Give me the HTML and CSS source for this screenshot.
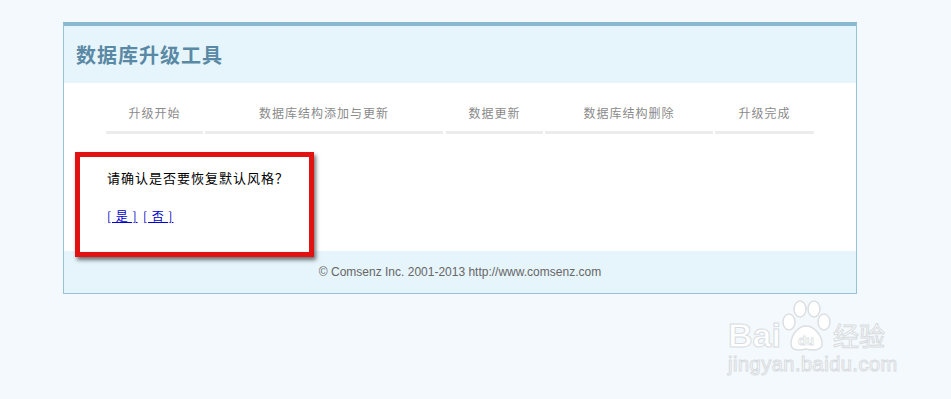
FILE: index.html
```html
<!DOCTYPE html>
<html lang="zh-CN">
<head>
    <meta charset="UTF-8">
    <title>数据库升级工具</title>
    <link rel="stylesheet" href="styles.css">
</head>
<body>
    <div class="container">
        <div class="header">
            <h1>数据库升级工具</h1>
        </div>
        <div class="main">
            <ul class="steps">
                <li class="s1">升级开始</li>
                <li class="s2">数据库结构添加与更新</li>
                <li class="s3">数据更新</li>
                <li class="s4">数据库结构删除</li>
                <li class="s5">升级完成</li>
            </ul>
            <div class="msg">
                <p>请确认是否要恢复默认风格？</p>
                <p class="links"><a href="#">[&nbsp;是&nbsp;]</a>&nbsp; <a href="#">[&nbsp;否&nbsp;]</a></p>
            </div>
        </div>
        <div class="footer">&copy; Comsenz Inc. 2001-2013 http://www.comsenz.com</div>
    </div>
    <div class="mark"></div>
    <div class="watermark">
        <div class="wm-top">
            <span class="wm-bai">Bai</span>
            <svg class="paw" width="50" height="52" viewBox="0 0 50 52">
                <g fill="#fff" stroke="#dcdfe2" stroke-width="1.5">
                    <ellipse cx="8" cy="22" rx="6" ry="8"/>
                    <ellipse cx="19" cy="9" rx="6" ry="8"/>
                    <ellipse cx="33" cy="9" rx="6" ry="8"/>
                    <ellipse cx="43" cy="22" rx="6" ry="8"/>
                    <path d="M10 44 C10 34 18 26 25 26 C32 26 41 34 41 44 C41 50 34 51 25 49 C16 51 10 50 10 44 Z"/>
                </g>
                <text x="25" y="45" text-anchor="middle" font-family="Liberation Sans, sans-serif" font-size="13" font-weight="bold" fill="#fff" stroke="#dcdfe2" stroke-width="0.8">du</text>
            </svg>
            <span class="wm-jy">经验</span>
        </div>
        <div class="wm-url">jingyan.baidu.com</div>
    </div>
</body>
</html>
```

FILE: styles.css
```css
body {
    margin: 0;
    padding: 0;
    background: #f3f9fd;
    font-family: "Liberation Sans", Arial, "Noto Sans CJK SC", sans-serif;
    font-size: 12px;
}
.container {
    width: 792px;
    margin: 22px 0 0 63px;
    border: 1px solid #98c2d6;
    border-top: 4px solid #88b9d3;
    background: #fff;
}
.header {
    height: 57px;
    background: #e6f5fb;
    display: flex;
    align-items: center;
    padding-left: 12px;
}
.header h1 {
    margin: 0;
    font-size: 20px;
    letter-spacing: 1px;
    color: #5a89a5;
    font-family: "Noto Sans CJK SC", sans-serif;
    font-weight: bold;
}
.main {
    padding: 20px 0 25px;
}
.steps {
    list-style: none;
    margin: 0;
    padding: 0 0 0 42px;
    display: flex;
}
.steps li {
    line-height: 20px;
    padding-bottom: 8px;
    border-bottom: 3px solid #ececec;
    margin-right: 2px;
    text-align: center;
    color: #8a8a8a;
    letter-spacing: 1px;
    font-family: "Noto Sans CJK SC", sans-serif;
}
.steps .s1 { width: 97px; }
.steps .s2 { width: 238px; margin-right: 3px; }
.steps .s3 { width: 97px; }
.steps .s4 { width: 168px; }
.steps .s5 { width: 99px; }
.msg {
    padding: 34px 0 0 43px;
    font-family: "Noto Sans CJK SC", sans-serif;
}
.msg p {
    margin: 0;
    line-height: 20px;
    font-size: 13px;
    letter-spacing: 1px;
    color: #000;
}
.msg .links {
    margin-top: 18px;
    font-size: 12px;
    letter-spacing: 0;
}
.msg a {
    color: #0000cc;
    letter-spacing: 1px;
}
.footer {
    height: 42px;
    line-height: 42px;
    background: #e6f5fb;
    text-align: center;
    color: #666;
}
.mark {
    position: absolute;
    left: 75px;
    top: 152px;
    width: 229px;
    height: 95px;
    border: 5px solid #e31212;
    box-shadow: 2px 3px 4px rgba(0, 0, 0, 0.55);
}
.watermark {
    position: absolute;
    left: 728px;
    top: 300px;
    color: #fff;
    font-family: "Liberation Sans", sans-serif;
}
.wm-top {
    display: flex;
    align-items: flex-end;
    height: 52px;
}
.wm-bai {
    font-size: 34px;
    font-weight: bold;
    line-height: 34px;
    -webkit-text-stroke: 1px #d8dcdf;
}
.paw {
    margin: 0 2px 0 0;
}
.wm-jy {
    font-size: 26px;
    line-height: 34px;
    font-family: "Noto Sans CJK SC", sans-serif;
    -webkit-text-stroke: 1px #d8dcdf;
}
.wm-url {
    font-size: 20px;
    line-height: 24px;
    letter-spacing: 0.5px;
    -webkit-text-stroke: 1px #d8dcdf;
}
```
